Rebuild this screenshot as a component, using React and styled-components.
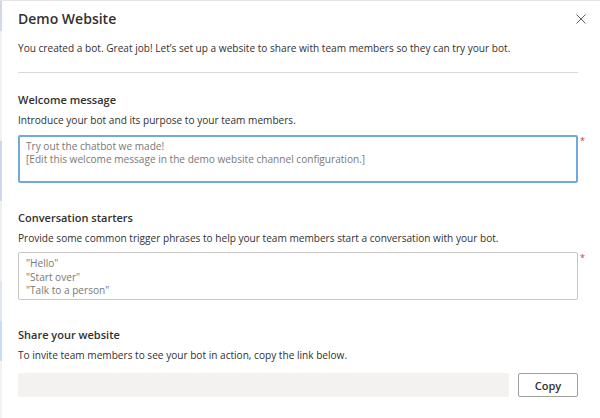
import React from "react";
import styled, { createGlobalStyle } from "styled-components";

const Global = createGlobalStyle`
  html, body { margin: 0; padding: 0; background: #fff; }
  body { font-family: "Open Sans", "Noto Sans", sans-serif; color: #323130; }
  * { box-sizing: border-box; }
`;

const Page = styled.div`
  width: 600px;
  height: 418px;
  display: flex;
  background: #fff;
  border-top: 1px solid #e3e3e3;
  overflow: hidden;
`;

const Edge = styled.div`
  width: 2px;
  flex: none;
  background: linear-gradient(
    to bottom,
    #d3d8e6 0px, #d3d8e6 30px,
    #f1f1f1 30px, #f1f1f1 140px,
    #cfd6ef 140px, #cfd6ef 200px,
    #eef0f4 200px, #eef0f4 280px,
    #dfe6f0 280px, #dfe6f0 320px,
    #c9dcf3 320px, #c9dcf3 360px,
    #f2f2f2 360px
  );
`;

const Dialog = styled.div`
  flex: 1;
  padding: 0 22px 0 16px;
  display: flex;
  flex-direction: column;
`;

const Header = styled.div`
  display: flex;
  justify-content: space-between;
  align-items: center;
  height: 35px;
`;

const Title = styled.h1`
  margin: 0;
  font-size: 14px;
  line-height: 18px;
  font-weight: 600;
  color: #323130;
`;

const Close = styled.button`
  border: 0;
  background: none;
  padding: 0;
  margin-right: -9px;
  width: 12px;
  height: 12px;
  display: flex;
  align-items: center;
  justify-content: center;
`;

const Intro = styled.p`
  margin: 5px 0 0;
  font-size: 10.1px;
  line-height: 14px;
`;

const Divider = styled.hr`
  margin: 17px 0 0;
  border: 0;
  border-top: 1px solid #d9d9d9;
`;

const Section = styled.section`
  margin-top: ${(p) => p.$top}px;
`;

const Heading = styled.h2`
  margin: 0;
  font-size: 11px;
  line-height: 16px;
  font-weight: 600;
`;

const Help = styled.p`
  margin: 5px 0 0;
  font-size: 10.1px;
  line-height: 14px;
`;

const FieldRow = styled.div`
  margin-top: ${(p) => p.$top}px;
  display: flex;
  align-items: flex-start;
  position: relative;
`;

const Area = styled.div`
  width: 560px;
  height: ${(p) => p.$h}px;
  border: ${(p) => (p.$focused ? "2px solid #6fa9de" : "1px solid #c8c6c4")};
  border-radius: 2px;
  padding: ${(p) => (p.$focused ? "3px 6px" : "4px 7px")};
  font-size: 10.1px;
  line-height: ${(p) => p.$lh}px;
  color: #7a7876;
  white-space: pre-line;
`;

const Star = styled.span`
  position: absolute;
  left: 562px;
  top: 1px;
  color: #c4314b;
  font-size: 9px;
  line-height: 9px;
`;

const ShareRow = styled.div`
  margin-top: 11px;
  display: flex;
  gap: 9px;
  width: 560px;
`;

const LinkBox = styled.div`
  flex: 1;
  height: 24px;
  background: #f3f2f1;
  border-radius: 2px;
`;

const CopyButton = styled.button`
  width: 60px;
  height: 24px;
  border: 1px solid #a19f9d;
  border-radius: 2px;
  background: #fff;
  font-family: inherit;
  font-size: 11px;
  font-weight: 600;
  color: #323130;
  padding: 0;
`;

export default function App() {
  return (
    <>
      <Global />
      <Page>
        <Edge />
        <Dialog>
          <Header>
            <Title>Demo Website</Title>
            <Close aria-label="Close">
              <svg width="10" height="10" viewBox="0 0 10 10">
                <path d="M0.5 0.5 L9.5 9.5 M9.5 0.5 L0.5 9.5" stroke="#605e5c" strokeWidth="1" fill="none" />
              </svg>
            </Close>
          </Header>
          <Intro>
            You created a bot. Great job! Let’s set up a website to share with team members so they can try your bot.
          </Intro>
          <Divider />
          <Section $top={19}>
            <Heading>Welcome message</Heading>
            <Help>Introduce your bot and its purpose to your team members.</Help>
            <FieldRow $top={8}>
              <Area $focused $h={48} $lh={13}>
                {"Try out the chatbot we made!\n[Edit this welcome message in the demo website channel configuration.]"}
              </Area>
              <Star>*</Star>
            </FieldRow>
          </Section>
          <Section $top={27}>
            <Heading>Conversation starters</Heading>
            <Help>Provide some common trigger phrases to help your team members start a conversation with your bot.</Help>
            <FieldRow $top={7}>
              <Area $h={48} $lh={13.5}>{'"Hello"\n"Start over"\n"Talk to a person"'}</Area>
              <Star>*</Star>
            </FieldRow>
          </Section>
          <Section $top={27}>
            <Heading>Share your website</Heading>
            <Help>To invite team members to see your bot in action, copy the link below.</Help>
            <ShareRow>
              <LinkBox />
              <CopyButton>Copy</CopyButton>
            </ShareRow>
          </Section>
        </Dialog>
      </Page>
    </>
  );
}
